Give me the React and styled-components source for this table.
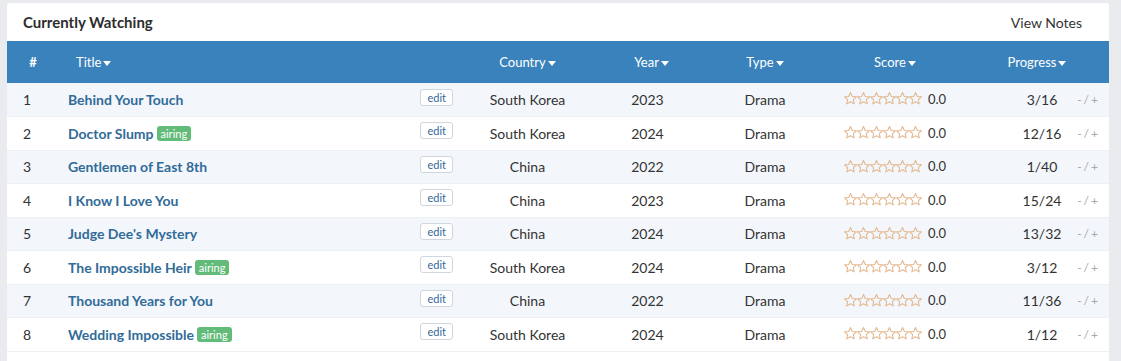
import React from 'react'
import styled, { createGlobalStyle } from 'styled-components'

const GlobalStyle = createGlobalStyle`
  html, body {
    margin: 0;
    padding: 0;
    background: #e9ebee;
    font-family: Lato, "Open Sans", "Liberation Sans", sans-serif;
    color: #333333;
  }
`

const Page = styled.div`
  padding: 3px 12px 0 7px;
`

const Card = styled.div`
  background: #ffffff;
  border-radius: 3px 3px 0 0;
  min-height: 358px;
`

const CardHeader = styled.div`
  display: flex;
  align-items: center;
  justify-content: space-between;
  height: 38px;
  padding: 0 27px 0 16px;
`

const CardTitle = styled.h2`
  margin: 0;
  font-size: 15px;
  font-weight: 700;
  color: #2d2d2d;
`

const HeaderLink = styled.span`
  font-size: 14px;
  color: #333333;
`

const Table = styled.table`
  width: 100%;
  border-collapse: collapse;
  table-layout: fixed;
`

const HeadRow = styled.tr`
  background: #3a82bb;
  height: 42px;
`

const Th = styled.th`
  box-sizing: border-box;
  color: #ffffff;
  font-size: 13px;
  font-weight: ${p => (p.$bold ? 700 : 400)};
  text-align: ${p => p.$align || 'center'};
  padding: ${p => p.$pad || '0'};
  width: ${p => (p.$w ? `${p.$w}px` : 'auto')};
`

const Caret = styled.span`
  display: inline-block;
  margin-left: 2px;
  vertical-align: middle;
  border-left: 4px solid transparent;
  border-right: 4px solid transparent;
  border-top: 5px solid #ffffff;
`

const Row = styled.tr`
  height: 33.5px;
  background: ${p => (p.$odd ? '#f3f7fb' : '#ffffff')};
  border-bottom: 1px solid #eef1f4;
`

const Td = styled.td`
  box-sizing: border-box;
  font-size: 14px;
  color: #333333;
  text-align: ${p => p.$align || 'center'};
  padding: ${p => p.$pad || '0'};
`

const TitleCell = styled.div`
  display: flex;
  align-items: center;
  justify-content: space-between;
  padding: 0 12px 0 9px;
`

const TitleText = styled.span`
  display: flex;
  align-items: center;
  gap: 3px;
`

const TitleLink = styled.a`
  font-size: 14px;
  font-weight: 700;
  color: #316b99;
  text-decoration: none;
`

const Airing = styled.span`
  background: #62bb78;
  color: #ffffff;
  font-size: 11px;
  line-height: 15px;
  padding: 0 4px;
  border-radius: 3px;
`

const EditButton = styled.span`
  font-size: 11px;
  color: #34699a;
  line-height: 15px;
  padding: 0 6px;
  border: 1px solid #cfd6dd;
  border-radius: 3px;
  background: #ffffff;
  margin-top: -5px;
`

const ScoreBox = styled.div`
  display: inline-flex;
  align-items: center;
  gap: 6px;
`

const Stars = styled.span`
  display: inline-flex;
`

const ScoreValue = styled.span`
  font-size: 13px;
  color: #333333;
`

const ProgressCell = styled.div`
  display: grid;
  grid-template-columns: 1fr auto 1fr;
  align-items: center;
  padding-left: 10px;
`

const ProgressText = styled.span`
  grid-column: 2;
  font-size: 14px;
`

const Stepper = styled.span`
  justify-self: end;
  padding-right: 9px;
  font-size: 12px;
  color: #a8a8a8;
  letter-spacing: 2px;
`

const Star = () => (
  <svg width='13' height='13' viewBox='0 0 24 24'>
    <path
      d='M12 1l3.3 7.2 7.7.8-5.8 5.2 1.7 7.8L12 18l-6.9 4 1.7-7.8L1 9l7.7-.8z'
      fill='none'
      stroke='#e3b68c'
      strokeWidth='1.9'
      strokeLinejoin='round'
    />
  </svg>
)

const shows = [
  { title: 'Behind Your Touch', country: 'South Korea', year: 2023, progress: '3/16' },
  { title: 'Doctor Slump', airing: true, country: 'South Korea', year: 2024, progress: '12/16' },
  { title: 'Gentlemen of East 8th', country: 'China', year: 2022, progress: '1/40' },
  { title: 'I Know I Love You', country: 'China', year: 2023, progress: '15/24' },
  { title: "Judge Dee's Mystery", country: 'China', year: 2024, progress: '13/32' },
  { title: 'The Impossible Heir', airing: true, country: 'South Korea', year: 2024, progress: '3/12' },
  { title: 'Thousand Years for You', country: 'China', year: 2022, progress: '11/36' },
  { title: 'Wedding Impossible', airing: true, country: 'South Korea', year: 2024, progress: '1/12' },
]

const SortHead = ({ children, ...rest }) => (
  <Th {...rest}>
    {children}
    <Caret />
  </Th>
)

const App = () => (
  <Page>
    <GlobalStyle />
    <Card>
      <CardHeader>
        <CardTitle>Currently Watching</CardTitle>
        <HeaderLink>View Notes</HeaderLink>
      </CardHeader>
      <Table>
        <thead>
          <HeadRow>
            <Th $w={52} $bold>#</Th>
            <SortHead $w={406} $align='left' $pad='0 0 0 17px'>Title</SortHead>
            <SortHead $w={125}>Country</SortHead>
            <SortHead $w={115} $pad='0 0 0 8px'>Year</SortHead>
            <SortHead $w={120}>Type</SortHead>
            <SortHead $w={140}>Score</SortHead>
            <SortHead>Progress</SortHead>
          </HeadRow>
        </thead>
        <tbody>
          {shows.map((s, i) => (
            <Row key={s.title} $odd={i % 2 === 0}>
              <Td $align='left' $pad='0 0 0 16px'>{i + 1}</Td>
              <Td $align='left'>
                <TitleCell>
                  <TitleText>
                    <TitleLink>{s.title}</TitleLink>
                    {s.airing && <Airing>airing</Airing>}
                  </TitleText>
                  <EditButton>edit</EditButton>
                </TitleCell>
              </Td>
              <Td>{s.country}</Td>
              <Td>{s.year}</Td>
              <Td>Drama</Td>
              <Td>
                <ScoreBox>
                  <Stars>
                    {[0, 1, 2, 3, 4, 5].map(n => <Star key={n} />)}
                  </Stars>
                  <ScoreValue>0.0</ScoreValue>
                </ScoreBox>
              </Td>
              <Td>
                <ProgressCell>
                  <ProgressText>{s.progress}</ProgressText>
                  <Stepper>-/+</Stepper>
                </ProgressCell>
              </Td>
            </Row>
          ))}
        </tbody>
      </Table>
    </Card>
  </Page>
)

export default App
